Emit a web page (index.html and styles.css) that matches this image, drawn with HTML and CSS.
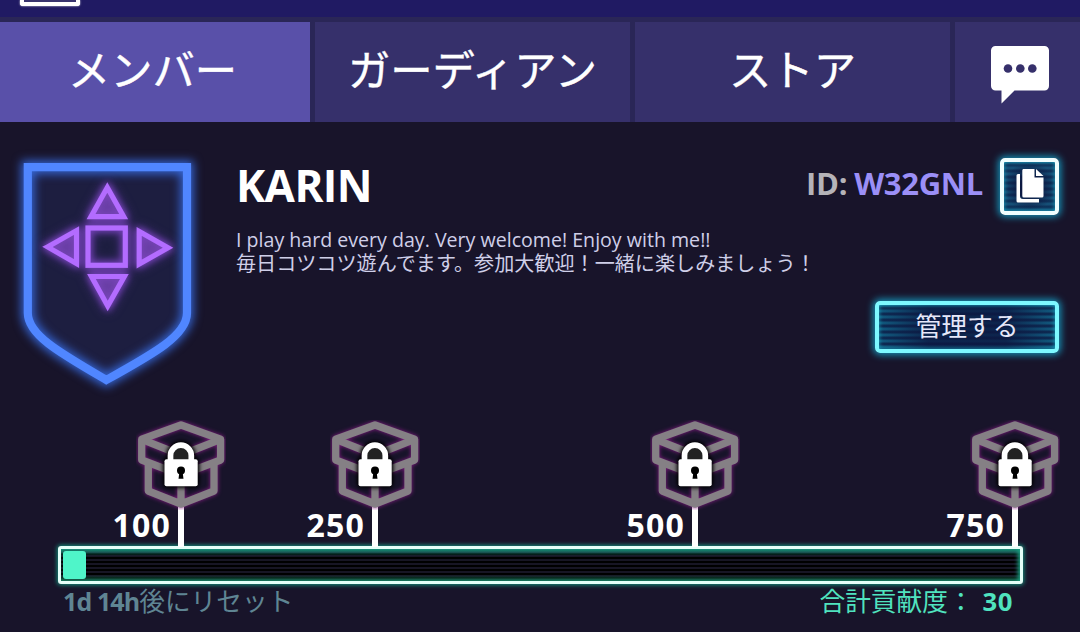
FILE: index.html
```html
<!DOCTYPE html>
<html lang="ja">

<head>
    <meta charset="utf-8">
    <title>KARIN</title>
    <link rel="stylesheet" href="styles.css">
</head>

<body>
    <!-- shared milestone icon -->
    <svg class="defs" width="0" height="0">
        <symbol id="locked-box" viewBox="0 0 90 90">
            <g class="box-lines">
                <path d="M5.7 19.3 45 5 84.6 19.3V40L45 55 5.7 40Z" />
                <path d="M5.7 19.3 45 35 84.6 19.3" />
                <path d="M12.3 42V71L45 84 78 71V42M45 55V84" />
            </g>
            <g class="lock">
                <path class="lock-inner" d="M37 40V35.5a8 8 0 0 1 16 0V40Z" />
                <path class="lock-shackle" d="M34.5 41V35.5a10.4 10.4 0 0 1 20.8 0V41" />
                <rect x="28.5" y="39.3" width="33.2" height="27" rx="2" fill="#fff" />
            </g>
            <circle cx="45" cy="50.5" r="4" />
            <path d="M43.5 51h3l1 7.8h-5z" />
        </symbol>
    </svg>

    <div class="topbar">
        <div class="topbar-box"></div>
    </div>

    <nav class="tabs">
        <a class="tab is-active">メンバー</a>
        <a class="tab">ガーディアン</a>
        <a class="tab">ストア</a>
        <a class="tab tab-chat">
            <svg width="58" height="58" viewBox="0 0 58 58">
                <path d="M4.5 0h49a4.5 4.5 0 0 1 4.5 4.5V40a4.5 4.5 0 0 1-4.5 4.5H23.5L10.5 57.5V44.5h-6A4.5 4.5 0 0 1 0 40V4.5A4.5 4.5 0 0 1 4.5 0Z" fill="#fff" />
                <g fill="#36306b">
                    <circle cx="17" cy="22.5" r="4.3" />
                    <circle cx="29.3" cy="22.5" r="4.3" />
                    <circle cx="41.3" cy="22.5" r="4.3" />
                </g>
            </svg>
        </a>
    </nav>

    <section class="guild">
        <svg class="emblem" width="220" height="260" viewBox="0 0 220 260">
            <path class="shield" d="M27.8 27.2H187V173C187 195 155 213 106.3 240C60 213 27.8 195 27.8 173Z" />
            <path class="shield-glow" d="M27.8 27.2H187V173C187 195 155 213 106.3 240C60 213 27.8 195 27.8 173Z" />
            <path class="shield-line" d="M27.8 27.2H187V173C187 195 155 213 106.3 240C60 213 27.8 195 27.8 173Z" />
            <g class="mark">
                <path d="M107.3 47.5 123.7 76.7H91Z" />
                <path d="M47.5 106.9 76.5 90.6V123.6Z" />
                <path d="M168 107.7 139.2 91.5V124Z" />
                <path d="M107.7 166 124.3 136.5H91.5Z" />
                <rect x="88" y="88" width="37.3" height="37.3" fill="none" />
            </g>
        </svg>

        <div class="info">
            <div class="info-head">
                <h1>KARIN</h1>
                <div class="guild-id"><span class="id-label">ID:</span><span class="id-code">W32GNL</span></div>
                <a class="neon copy">
                    <svg width="28" height="34" viewBox="0 0 28 34">
                        <path d="M2 5h2v22a3 3 0 0 0 3 3h16v3.5H2a1.5 1.5 0 0 1-1.5-1.5V6.500A1.5 1.5 0 0 1 2 5Z" />
                        <path d="M8 0H18.500V8.500H27.500V27a1.5 1.5 0 0 1-1.5 1.5H7.800A1.5 1.5 0 0 1 6.300 27V1.500A1.5 1.5 0 0 1 8 0Z" />
                        <path d="M20 0 27.5 7H20Z" />
                    </svg>
                </a>
            </div>
            <div class="message">
                <p class="message-en">I play hard every day. Very welcome! Enjoy with me!!</p>
                <p class="message-ja">毎日コツコツ遊んでます。参加大歓迎！一緒に楽しみましょう！</p>
            </div>
            <a class="neon manage">管理する</a>
        </div>
    </section>

    <section class="progress">
        <div class="milestones">
            <div class="milestone">
                <svg class="box" width="90" height="90"><use href="#locked-box" /></svg>
                <div class="marker">100</div>
            </div>
            <div class="milestone">
                <svg class="box" width="90" height="90"><use href="#locked-box" /></svg>
                <div class="marker">250</div>
            </div>
            <div class="milestone">
                <svg class="box" width="90" height="90"><use href="#locked-box" /></svg>
                <div class="marker">500</div>
            </div>
            <div class="milestone">
                <svg class="box" width="90" height="90"><use href="#locked-box" /></svg>
                <div class="marker">750</div>
            </div>
        </div>
        <div class="bar">
            <div class="bar-fill" style="width: 23px"></div>
        </div>
        <div class="notes">
            <span class="reset"><b>1d 14h</b>後にリセット</span>
            <span class="total">合計貢献度：<b>30</b></span>
        </div>
    </section>
</body>

</html>
```
FILE: styles.css
```css
* {
    box-sizing: border-box;
}

body {
    margin: 0;
    height: 632px;
    overflow: hidden;
    background: #18142a;
    color: #fff;
    font-family: 'Open Sans', 'Noto Sans CJK JP', sans-serif;
}

.defs {
    position: absolute;
}

.topbar {
    height: 22px;
    padding-left: 20px;
    background: #201a63;
    border-bottom: 5px solid #2a2657;
}

.topbar-box {
    width: 60px;
    height: 6px;
    background: #39346f;
    border: solid #fff;
    border-width: 0 4px 4px;
    border-radius: 0 0 3px 3px;
    box-shadow: 0 0 2px #fff;
}

.tabs {
    display: grid;
    grid-template-columns: 310px 315px 315px 125px;
    gap: 5px;
    height: 100px;
    background: #2a2657;
}

.tab {
    display: flex;
    align-items: center;
    justify-content: center;
    padding-bottom: 7px;
    background: #36306b;
    font: 42.3px/1 'Noto Sans CJK JP', sans-serif;
    -webkit-text-stroke: 0.4px #fff;
}

.tab-chat {
    padding: 5px 0 0 5px;
}

.is-active {
    padding-right: 5px;
    background: #5950a9;
}

.guild {
    display: flex;
    height: 298px;
    padding: 18px 21px 0 0;
}

.emblem {
    flex: none;
    overflow: visible;
}

.shield {
    fill: #1d1e40;
}

.shield-glow {
    fill: none;
    stroke: #3565d4;
    stroke-width: 13;
    filter: blur(5px);
}

.shield-line {
    fill: none;
    stroke: #5086ff;
    stroke-width: 8.2;
}

.mark {
    fill: #7d4bb855;
    stroke: #b36cff;
    stroke-width: 5.2;
    filter: drop-shadow(0 0 3px #7a45c0) drop-shadow(0 0 5px #6a3cab);
}

.info {
    flex: 1;
    padding: 18px 0 0 16px;
}

.info-head {
    display: flex;
    align-items: center;
    height: 56px;
}

h1 {
    flex: 1;
    margin: 0;
    font-size: 44px;
    line-height: 52px;
    letter-spacing: -0.6px;
    padding-bottom: 3px;
}

.guild-id {
    display: flex;
    gap: 7px;
    padding-bottom: 6px;
    font-size: 31px;
    font-weight: bold;
    line-height: 50px;
    letter-spacing: -0.3px;
}

.id-label {
    color: #b5b3b8;
}

.id-code {
    color: #9b8ff7;
}

.neon {
    display: flex;
    align-items: center;
    justify-content: center;
    border: 4px solid #effeff;
    border-radius: 5px;
    background:
        radial-gradient(closest-side, #0c1740 35%, transparent),
        repeating-linear-gradient(#17567d, #0d2b54 3px, #17567d 6px);
    box-shadow: 0 0 7px 2px #168fb4, inset 0 0 4px #19a5c0;
}

.copy {
    width: 59px;
    height: 57px;
    margin-left: 17px;
    fill: #fff;
}

.message {
    height: 48px;
    margin: 14px 0 25px 0;
    color: #cfcfe8;
    white-space: nowrap;
}

.message p {
    margin: 0;
    line-height: 24px;
}

.message-en {
    font-size: 19.6px;
}

.message-ja {
    font-size: 20.1px;
}

.manage {
    width: 184px;
    height: 52px;
    margin: 0 0 0 auto;
    padding-bottom: 4px;
    border-color: #7df8ff;
    background:
        linear-gradient(90deg, transparent, #0c1740cc 28% 72%, transparent),
        repeating-linear-gradient(#12668a, #0c1f48 3px, #12668a 6px);
    color: #e6e8fa;
    font: 25.8px/1 'Noto Sans CJK JP', sans-serif;
}

.milestones {
    display: grid;
    grid-template-columns: 226px 194px 320px 320px;
}

.milestone {
    display: flex;
    flex-direction: column;
    align-items: flex-end;
}

.box {
    position: relative;
    overflow: visible;
    margin-bottom: -3px;
}

.box-lines {
    fill: none;
    stroke: #858085;
    stroke-width: 7.3;
    stroke-linejoin: round;
    filter: drop-shadow(0 0 2px #8a1b88);
}

.lock {
    filter: drop-shadow(0 0 2px #000) drop-shadow(0 0 2px #000);
}

.lock-inner {
    fill: #222;
}

.lock-shackle {
    fill: none;
    stroke: #fff;
    stroke-width: 5.7;
}

.marker {
    height: 40px;
    margin-right: 42px;
    padding-right: 7px;
    border-right: 6px solid #fff;
    font-size: 32px;
    font-weight: bold;
    line-height: 36px;
    letter-spacing: 1.2px;
}

.bar {
    width: 965px;
    height: 38px;
    margin: -1px 0 0 58px;
    padding: 2px;
    border: 3px solid #e4fff9;
    border-radius: 3px;
    background:
        linear-gradient(#1c8777, transparent 22% 80%, #15513b),
        repeating-linear-gradient(#000 0 2px, #171524 2px 4px);
    box-shadow: 0 0 4px 1px #15917c, inset -2px 0 4px #19a082;
}

.bar-fill {
    height: 28px;
    border-radius: 3px;
    background: #4ff5c9;
}

.notes {
    display: flex;
    justify-content: space-between;
    margin: 0 67px 0 63px;
    font-size: 25.7px;
    line-height: 35px;
}

.reset {
    color: #5f8593;
}

.reset b {
    font-size: 25px;
    letter-spacing: -0.9px;
}

.total {
    color: #50e3bf;
}

.total b {
    margin-left: 9px;
    letter-spacing: 0.5px;
}
```
